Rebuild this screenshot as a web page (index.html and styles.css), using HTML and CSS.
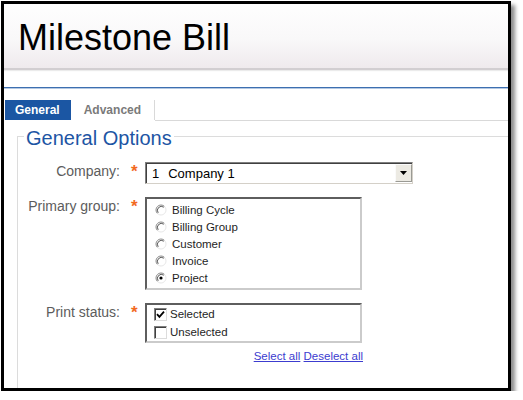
FILE: index.html
```html
<!DOCTYPE html>
<html lang="en">
<head>
<meta charset="utf-8">
<title>Milestone Bill</title>
<link rel="stylesheet" href="styles.css">
</head>
<body>
<div class="frame">
  <header class="page-header">
    <h1>Milestone Bill</h1>
  </header>
  <div class="rule"></div>
  <nav class="tabs">
    <span class="tab active">General</span>
    <span class="tab">Advanced</span>
    <span class="tab-fill"></span>
  </nav>
  <fieldset class="options">
    <legend>General Options</legend>

    <div class="row">
      <label class="lbl">Company:</label>
      <span class="req">*</span>
      <div class="select">
        <span class="sel-num">1</span>
        <span class="sel-text">Company 1</span>
        <span class="sel-btn">
          <svg width="7" height="4" viewBox="0 0 7 4"><path d="M0 0H7L3.5 4Z" fill="#000"/></svg>
        </span>
      </div>
    </div>

    <div class="row">
      <label class="lbl">Primary group:</label>
      <span class="req">*</span>
      <div class="listbox">
        <div class="opt"><svg class="radio" viewBox="0 0 12 12"><circle cx="6" cy="6" r="5" fill="#fff"/><path d="M9.54 2.46A5 5 0 0 0 2.46 9.54" fill="none" stroke="#8c8c8c"/><path d="M8.8 3.2A4 4 0 0 0 3.2 8.8" fill="none" stroke="#5a5a5a"/><path d="M2.46 9.54A5 5 0 0 0 9.54 2.46" fill="none" stroke="#e8e8e8"/></svg><span>Billing Cycle</span></div>
        <div class="opt"><svg class="radio" viewBox="0 0 12 12"><circle cx="6" cy="6" r="5" fill="#fff"/><path d="M9.54 2.46A5 5 0 0 0 2.46 9.54" fill="none" stroke="#8c8c8c"/><path d="M8.8 3.2A4 4 0 0 0 3.2 8.8" fill="none" stroke="#5a5a5a"/><path d="M2.46 9.54A5 5 0 0 0 9.54 2.46" fill="none" stroke="#e8e8e8"/></svg><span>Billing Group</span></div>
        <div class="opt"><svg class="radio" viewBox="0 0 12 12"><circle cx="6" cy="6" r="5" fill="#fff"/><path d="M9.54 2.46A5 5 0 0 0 2.46 9.54" fill="none" stroke="#8c8c8c"/><path d="M8.8 3.2A4 4 0 0 0 3.2 8.8" fill="none" stroke="#5a5a5a"/><path d="M2.46 9.54A5 5 0 0 0 9.54 2.46" fill="none" stroke="#e8e8e8"/></svg><span>Customer</span></div>
        <div class="opt"><svg class="radio" viewBox="0 0 12 12"><circle cx="6" cy="6" r="5" fill="#fff"/><path d="M9.54 2.46A5 5 0 0 0 2.46 9.54" fill="none" stroke="#8c8c8c"/><path d="M8.8 3.2A4 4 0 0 0 3.2 8.8" fill="none" stroke="#5a5a5a"/><path d="M2.46 9.54A5 5 0 0 0 9.54 2.46" fill="none" stroke="#e8e8e8"/></svg><span>Invoice</span></div>
        <div class="opt"><svg class="radio" viewBox="0 0 12 12"><circle cx="6" cy="6" r="5" fill="#fff"/><path d="M9.54 2.46A5 5 0 0 0 2.46 9.54" fill="none" stroke="#8c8c8c"/><path d="M8.8 3.2A4 4 0 0 0 3.2 8.8" fill="none" stroke="#5a5a5a"/><path d="M2.46 9.54A5 5 0 0 0 9.54 2.46" fill="none" stroke="#e8e8e8"/><circle cx="6" cy="6" r="1.6" fill="#000"/></svg><span>Project</span></div>
      </div>
    </div>

    <div class="row">
      <label class="lbl">Print status:</label>
      <span class="req">*</span>
      <div class="control">
        <div class="listbox checks">
          <div class="opt"><span class="cb"><svg width="9" height="9" viewBox="0 0 9 9"><path d="M1 4.2L3.4 6.8L8 1.6" fill="none" stroke="#000" stroke-width="1.8"/></svg></span><span>Selected</span></div>
          <div class="opt"><span class="cb"></span><span>Unselected</span></div>
        </div>
        <div class="links"><a href="#">Select all</a> <a href="#">Deselect all</a></div>
      </div>
    </div>
  </fieldset>
</div>
</body>
</html>
```

FILE: styles.css
```css
html, body {
  margin: 0;
  padding: 0;
  background: #fff;
}

body {
  font-family: "Liberation Sans", Arial, sans-serif;
}

.frame {
  margin: 1px 0 0 1px;
  width: 504px;
  height: 384px;
  border: 3px solid #000;
  box-shadow: 4px 4px 4px rgba(0, 0, 0, 0.45);
  overflow: hidden;
  background: #fff;
}

.page-header {
  height: 64px;
  background: linear-gradient(#fefefe, #f9f8f9 55%, #efeaed);
  border-bottom: 2px solid #d2ced1;
  box-shadow: 0 1px 1px rgba(0, 0, 0, 0.08);
}

.page-header h1 {
  margin: 0;
  padding: 14px 0 0 14px;
  font-size: 36px;
  line-height: 40px;
  font-weight: normal;
  color: #000;
}

.rule {
  margin-top: 17px;
  border-top: 1px solid #3d6fb0;
  border-bottom: 1px solid #b4c8e2;
}

.tabs {
  display: flex;
  align-items: flex-start;
  margin-top: 11px;
  padding-left: 1px;
  height: 21px;
}

.tab {
  height: 20px;
  padding: 0 13px;
  font-size: 12px;
  line-height: 20px;
  font-weight: bold;
  color: #7a7a7a;
  border-right: 1px solid #d9d9d9;
}

.tab.active {
  background: #1b56a3;
  color: #fff;
  padding: 0 11px 0 10px;
  border-right: 0;
}

.tab-fill {
  flex: 1;
  height: 20px;
  border-bottom: 1px solid #d9d9d9;
}

.options {
  margin: 2px 0 0 13px;
  padding: 13px 0 60px 0;
  border: 1px solid #dcdcdc;
  border-right: 0;
  border-bottom: 0;
  min-width: 0;
}

.options legend {
  margin-left: 6px;
  padding: 4px 2px 0;
  font-size: 20px;
  line-height: 22px;
  color: #1d55a4;
}

.row {
  display: flex;
  align-items: flex-start;
  margin-bottom: 13px;
}

.lbl {
  width: 102px;
  flex: none;
  text-align: right;
  font-size: 14px;
  line-height: 18px;
  color: #5c5c5c;
}

.req {
  width: 25px;
  flex: none;
  box-sizing: border-box;
  padding: 1px 0 0 11px;
  font-size: 17px;
  line-height: 18px;
  font-weight: bold;
  color: #f26a1f;
}

.select {
  width: 268px;
  height: 22px;
  box-sizing: border-box;
  display: flex;
  align-items: center;
  border: 1px solid;
  border-color: #7f7f7f #d4d0c8 #d4d0c8 #7f7f7f;
  box-shadow: inset 1px 1px 0 #404040;
  background: #fff;
  font-size: 13px;
  color: #000;
}

.sel-num {
  margin-left: 6px;
}

.sel-text {
  margin-left: 9px;
  flex: 1;
}

.sel-btn {
  width: 17px;
  height: 18px;
  box-sizing: border-box;
  margin-right: 0;
  display: flex;
  align-items: center;
  justify-content: center;
  background: #eceae3;
  border: 1px solid;
  border-color: #fafafa #9a9a94 #9a9a94 #fafafa;
}

.listbox {
  width: 217px;
  box-sizing: border-box;
  border: 2px solid;
  border-color: #5e5e5e #cbcbcb #cbcbcb #5e5e5e;
  padding: 2px 0;
  background: #fff;
}

.opt {
  display: flex;
  align-items: center;
  gap: 5px;
  height: 17px;
  padding-left: 8px;
  font-size: 11.5px;
  color: #1e1e1e;
}

.radio {
  width: 12px;
  height: 12px;
  flex: none;
}

.control {
  display: flex;
  flex-direction: column;
}

.checks {
  padding: 0;
}

.checks .opt {
  height: 18px;
  padding-left: 7px;
  gap: 3px;
}

.cb {
  width: 13px;
  height: 13px;
  flex: none;
  box-sizing: border-box;
  display: flex;
  align-items: center;
  justify-content: center;
  border: 1px solid;
  border-color: #7f7f7f #dcdcdc #dcdcdc #7f7f7f;
  box-shadow: inset 1px 1px 0 #404040;
  background: #fff;
}

.links {
  width: 218px;
  margin-top: 6px;
  text-align: right;
  font-size: 11.5px;
  line-height: 14px;
}

.links a {
  color: #3c3ccf;
  text-decoration: underline;
}
```
